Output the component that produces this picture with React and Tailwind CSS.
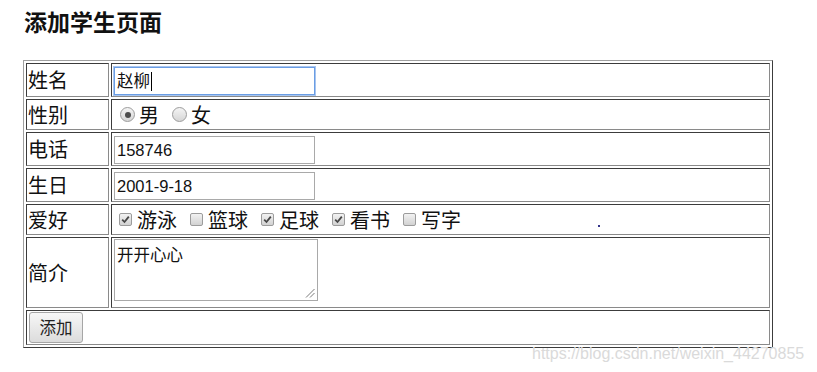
import React from 'react';

const cjk = "font-['Noto_Sans_CJK_SC',sans-serif]";
const field = "font-['Liberation_Sans','Noto_Sans_CJK_SC',sans-serif]";

// inset cell border like <table border="1">
const cell = 'border border-t-[#3c3c3c] border-l-[#3c3c3c] border-b-[#8a8a8a] border-r-[#8a8a8a]';

const Label = ({ children }) => (
  <div className={`${cell} w-[83px] shrink-0 flex items-center pl-[1px] text-[20px] leading-none text-[#111] ${cjk}`}>
    {children}
  </div>
);

const TextBox = ({ value, focused }) => (
  <div
    className={`w-[201px] h-[28px] flex items-center px-[2px] text-[16.5px] leading-none text-[#111] bg-white ${field} ${
      focused
        ? 'border border-[#6a9de4] shadow-[0_0_0_1px_#a8c5ef]'
        : 'border border-[#a9a9a9]'
    }`}
  >
    {value}
    {focused && <span className="ml-[1px] w-[1px] h-[19px] bg-black" />}
  </div>
);

const Radio = ({ checked }) => (
  <span className="w-[15px] h-[15px] rounded-full border border-[#9c9c9c] bg-gradient-to-b from-[#f4f4f4] to-[#d6d6d6] flex items-center justify-center shrink-0">
    {checked && <span className="w-[6px] h-[6px] rounded-full bg-[#4d4d4d]" />}
  </span>
);

const Check = ({ checked }) => (
  <span className="w-[13px] h-[13px] rounded-[2px] border border-[#9c9c9c] bg-gradient-to-b from-[#f2f2f2] to-[#d2d2d2] flex items-center justify-center shrink-0">
    {checked && (
      <svg width="9" height="9" viewBox="0 0 9 9">
        <path d="M1.2 4.6 L3.5 7 L7.8 1.6" fill="none" stroke="#474747" strokeWidth="1.8" />
      </svg>
    )}
  </span>
);

const hobbies = [
  { name: '游泳', checked: true },
  { name: '篮球', checked: false },
  { name: '足球', checked: true },
  { name: '看书', checked: true },
  { name: '写字', checked: false },
];

export default function App() {
  return (
    <div className="relative w-[817px] h-[372px] bg-white overflow-hidden pt-[10px] pl-[23px]">
      <h3 className={`ml-[1px] h-[23px] text-[23px] leading-none font-bold text-[#111] ${cjk}`}>添加学生页面</h3>

      <div className="mt-[27px] w-[750px] border border-t-[#a0a0a0] border-l-[#a0a0a0] border-b-[#3c3c3c] border-r-[#3c3c3c] p-[2px] flex flex-col gap-[2px]">
        {/* 姓名 */}
        <div className="flex gap-[2px] h-[34px]">
          <Label>姓名</Label>
          <div className={`${cell} flex-1 pl-[2px] pt-[3px]`}>
            <TextBox value="赵柳" focused />
          </div>
        </div>

        {/* 性别 */}
        <div className="flex gap-[2px] h-[31px]">
          <Label>性别</Label>
          <div className={`${cell} flex-1 flex items-center text-[20px] leading-none text-[#111] ${cjk}`}>
            <span className="ml-[8px]"><Radio checked /></span>
            <span className="ml-[4px]">男</span>
            <span className="ml-[13px]"><Radio /></span>
            <span className="ml-[4px]">女</span>
          </div>
        </div>

        {/* 电话 */}
        <div className="flex gap-[2px] h-[34px]">
          <Label>电话</Label>
          <div className={`${cell} flex-1 pl-[2px] pt-[3px]`}>
            <TextBox value="158746" />
          </div>
        </div>

        {/* 生日 */}
        <div className="flex gap-[2px] h-[34px]">
          <Label>生日</Label>
          <div className={`${cell} flex-1 pl-[2px] pt-[3px]`}>
            <TextBox value="2001-9-18" />
          </div>
        </div>

        {/* 爱好 */}
        <div className="flex gap-[2px] h-[31px]">
          <Label>爱好</Label>
          <div className={`${cell} flex-1 flex items-center text-[20px] leading-none text-[#111] ${cjk}`}>
            {hobbies.map((h, i) => (
              <React.Fragment key={h.name}>
                <span className={i === 0 ? 'ml-[7px]' : 'ml-[13px]'}><Check checked={h.checked} /></span>
                <span className="ml-[5px]">{h.name}</span>
              </React.Fragment>
            ))}
          </div>
        </div>

        {/* 简介 */}
        <div className="flex gap-[2px] h-[71px]">
          <Label>简介</Label>
          <div className={`${cell} flex-1 pl-[2px] pt-[1px]`}>
            <div className="relative w-[204px] h-[62px] border border-[#a9a9a9] bg-white pl-[2px] pt-[3px]">
              <span className={`text-[16.5px] leading-none text-[#111] ${cjk}`}>开开心心</span>
              <svg className="absolute right-[2px] bottom-[2px]" width="10" height="10" viewBox="0 0 10 10">
                <path d="M9.5 1 L1 9.5 M9.5 5 L5 9.5" stroke="#7a7a7a" strokeWidth="1" />
              </svg>
            </div>
          </div>
        </div>

        {/* 添加 */}
        <div className="flex h-[35px]">
          <div className={`${cell} flex-1 pl-[2px] pt-[1px]`}>
            <button className={`w-[54px] h-[31px] rounded-[3px] border border-[#a6a6a6] bg-gradient-to-b from-[#f7f7f7] to-[#dcdcdc] text-[16.5px] leading-none text-[#222] ${cjk}`}>
              添加
            </button>
          </div>
        </div>
      </div>

      <span className="absolute left-[598px] top-[225px] w-[2px] h-[2px] bg-[#34348a]" />

      <span className="absolute left-[532px] top-[345px] text-[16px] leading-[18px] text-[#dadada] font-['Liberation_Sans',sans-serif] whitespace-nowrap">
        https://blog.csdn.net/weixin_44270855
      </span>
    </div>
  );
}
